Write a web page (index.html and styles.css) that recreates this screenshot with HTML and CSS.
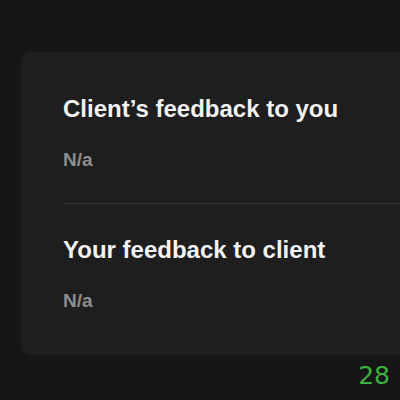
FILE: index.html
```html
<!DOCTYPE html>
<html>
<head>
<meta charset="utf-8">
<link rel="stylesheet" href="styles.css">
</head>
<body>
<div class="page">
  <div class="card">
    <section class="block">
      <h2 class="title">Client’s feedback to you</h2>
      <p class="value">N/a</p>
    </section>
    <div class="divider"></div>
    <section class="block">
      <h2 class="title">Your feedback to client</h2>
      <p class="value">N/a</p>
    </section>
  </div>
  <div class="footer"><span class="count">28</span></div>
</div>
</body>
</html>
```
FILE: styles.css
```css
html, body {
  margin: 0;
  padding: 0;
  background: #161616;
  width: 400px;
  height: 400px;
  overflow: hidden;
}
.page {
  padding: 52px 0 0 21px;
  font-family: "Liberation Sans", Arial, sans-serif;
}
.card {
  background: #1e1e1e;
  border-radius: 10px 0 0 10px;
  height: 303px;
  padding: 42px 0 0 42px;
  box-sizing: border-box;
}
.title {
  margin: 0;
  color: #f2f2f2;
  font-size: 24px;
  font-weight: bold;
  line-height: 30px;
}
.value {
  margin: 25px 0 0;
  color: #8e8e8e;
  font-size: 19px;
  font-weight: bold;
  line-height: 22px;
}
.divider {
  height: 1px;
  background: #363636;
  margin: 32px 0 31px;
}
.footer {
  display: flex;
  justify-content: flex-end;
  padding-right: 10px;
}
.count {
  color: #3fae3f;
  font-family: "DejaVu Sans", sans-serif;
  font-size: 25px;
  line-height: 30px;
  margin-top: 6px;
}
```
